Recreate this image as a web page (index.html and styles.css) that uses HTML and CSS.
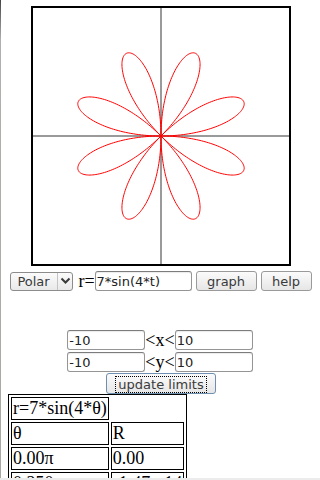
FILE: index.html
```html
<!DOCTYPE html>
<html>
<head>
    <title>Polar graph</title>
    <meta charset="UTF-8">
    <link rel="stylesheet" href="styles.css">
</head>
<body>
    <div class="edge"></div>
    <canvas id="lienzo" width="256" height="256"></canvas>

    <div class="controles">
        <label class="selector">
            <select id="modo">
                <option>Polar</option>
                <option>Cartesian</option>
            </select>
            <span class="flecha">
                <svg width="11" height="8" viewBox="0 0 11 8"><path d="M1.5 1.5 L5.5 5.5 L9.5 1.5" fill="none" stroke="#3a3a3a" stroke-width="2"/></svg>
            </span>
        </label>
        <span class="etiqueta">r=</span><input type="text" id="funcion" class="campo ancho" value="7*sin(4*t)">
        <button class="boton graph">graph</button>
        <button class="boton help">help</button>
    </div>

    <div class="limites">
        <div class="fila"><input type="text" class="campo" value="-10"><span class="etiqueta">&lt;x&lt;</span><input type="text" class="campo" value="10"></div>
        <div class="fila"><input type="text" class="campo" value="-10"><span class="etiqueta">&lt;y&lt;</span><input type="text" class="campo" value="10"></div>
        <button class="boton actualizar"><span class="foco">update limits</span></button>
    </div>

    <table class="tabla">
        <tr><td>r=7*sin(4*θ)</td></tr>
        <tr><td>θ</td><td>R</td></tr>
        <tr><td>0.00π</td><td>0.00</td></tr>
        <tr><td>0.250</td><td>-1.47e-14</td></tr>
    </table>

    <div class="pie"></div>

    <script>
        var lienzo = document.getElementById('lienzo');
        var ctx = lienzo.getContext('2d');
        var escala = 256 / 20;

        ctx.strokeStyle = '#7a7a7a';
        ctx.lineWidth = 1.5;
        ctx.beginPath();
        ctx.moveTo(128, 0);
        ctx.lineTo(128, 256);
        ctx.moveTo(0, 128);
        ctx.lineTo(256, 128);
        ctx.stroke();

        ctx.strokeStyle = '#ff0000';
        ctx.lineWidth = 1;
        ctx.beginPath();
        for (var i = 0; i <= 800; i++) {
            var t = i / 800 * 2 * Math.PI;
            var r = 7 * Math.sin(4 * t);
            var x = 128 + r * Math.cos(t) * escala;
            var y = 128 - r * Math.sin(t) * escala;
            if (i == 0) ctx.moveTo(x, y); else ctx.lineTo(x, y);
        }
        ctx.stroke();
    </script>
</body>
</html>
```

FILE: styles.css
```css
body {
    margin: 6px 8px 0;
    font-family: 'Liberation Serif', serif;
    font-size: 18px;
    background-color: #fff;
    color: #000;
}
.edge {
    position: fixed;
    left: 0;
    top: 0;
    bottom: 0;
    width: 1px;
    background: linear-gradient(#444, #b0b0b0 40px, #a8a8a2);
}
.pie {
    position: fixed;
    left: 0;
    right: 0;
    bottom: 0;
    height: 2px;
    background-color: #ececec;
}
#lienzo {
    display: block;
    margin: 0 auto;
    border: 2px solid #000;
    position: relative;
    left: 1px;
}
.controles {
    display: flex;
    justify-content: center;
    align-items: center;
    margin-top: 5px;
    height: 20px;
    padding-left: 2px;
}
.selector {
    display: flex;
    align-items: stretch;
    width: 61px;
    height: 17px;
    border: 1px solid #8c8c8c;
    border-radius: 3px;
    background: linear-gradient(#fbfbfb, #e9e9e9);
    margin-right: 5px;
}
.selector select {
    -webkit-appearance: none;
    appearance: none;
    border: none;
    background: transparent;
    font-family: 'DejaVu Sans', sans-serif;
    font-size: 13px;
    color: #3a3a3a;
    padding: 0 0 0 6px;
    width: 46px;
    outline: none;
}
.flecha {
    display: flex;
    align-items: center;
    justify-content: center;
    width: 15px;
    border-left: 1px solid #c4c4c4;
}
.etiqueta {
    line-height: 20px;
}
.campo {
    box-sizing: border-box;
    width: 78px;
    height: 20px;
    padding: 0 1px;
    border: 1px solid #959595;
    border-top-color: #7c7c7c;
    border-radius: 3px;
    box-shadow: inset 0 1px 1px rgba(0, 0, 0, 0.08);
    background-color: #fff;
    font-family: 'DejaVu Sans', sans-serif;
    font-size: 13px;
    color: #222;
}
.ancho {
    width: 97px;
}
.boton {
    box-sizing: border-box;
    height: 20px;
    padding: 0;
    border: 1px solid #9a9a9a;
    border-radius: 3px;
    background: linear-gradient(#fbfbfb, #e6e6e6);
    font-family: 'DejaVu Sans', sans-serif;
    font-size: 13px;
    color: #3a3a3a;
}
.graph {
    width: 61px;
    margin-left: 4px;
}
.help {
    width: 51px;
    margin-left: 4px;
}
.limites {
    display: flex;
    flex-direction: column;
    align-items: center;
    margin-top: 39px;
    gap: 2px;
}
.fila {
    display: flex;
    align-items: center;
    height: 20px;
}
.actualizar {
    width: 110px;
    height: 21px;
    margin-top: -1px;
    padding: 2px 8px;
    border-color: #6f8fb0;
    position: relative;
    left: 1px;
}
.foco {
    display: block;
    border: 1px dotted #000;
    line-height: 15px;
}
.tabla {
    border: 1px solid #000;
    border-spacing: 2px;
}
.tabla td {
    border: 1px solid #000;
    padding: 0 1px;
    text-align: left;
}
```
